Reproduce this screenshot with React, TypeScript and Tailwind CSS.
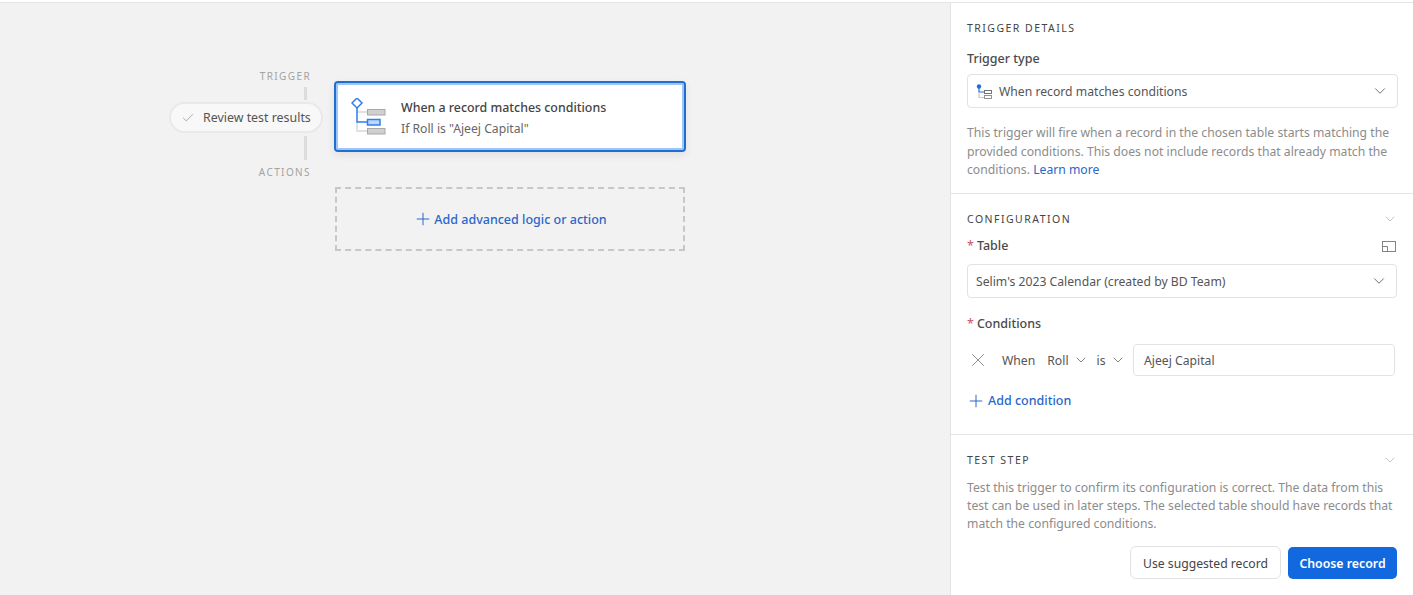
import { Check, ChevronDown, Plus, X } from 'lucide-react';

function TreeIcon() {
  return (
    <svg width="36" height="38" viewBox="0 0 36 38" fill="none">
      <path d="M6 14H16M6 24V33H16" stroke="#d8d8d8" strokeWidth="1.5" />
      <path d="M6 9V24H16" stroke="#2d7ff0" strokeWidth="1.5" />
      <path d="M6 0L11 5L6 10L1 5Z" fill="#fff" stroke="#2d7ff0" strokeWidth="1.5" />
      <rect x="16.5" y="11.5" width="17.5" height="5.5" fill="#d0d0d0" stroke="#a8a8a8" />
      <rect x="16.5" y="21.5" width="12.5" height="5.5" fill="#bcd7fa" stroke="#2d7ff0" strokeWidth="1.5" />
      <rect x="16.5" y="30.5" width="17.5" height="5.5" fill="#d0d0d0" stroke="#a8a8a8" />
    </svg>
  );
}

function SmallTreeIcon() {
  return (
    <svg width="16" height="17" viewBox="0 0 16 17" fill="none">
      <path d="M3 3V9H8" stroke="#1f6fe0" strokeWidth="1.2" />
      <path d="M3 9V14.5H8" stroke="#c8c8c8" strokeWidth="1.2" />
      <circle cx="3" cy="3.5" r="2.2" fill="#1f6fe0" />
      <rect x="8.5" y="7.5" width="7" height="3" stroke="#666" strokeWidth="0.9" />
      <rect x="8.5" y="12.5" width="7" height="3" stroke="#888" strokeWidth="0.9" />
    </svg>
  );
}

function SectionTitle({ children }: { children: string }) {
  return <h2 className="text-[10.5px] leading-[14px] tracking-[0.14em] text-[#444] uppercase">{children}</h2>;
}

function Label({ children }: { children: string }) {
  return (
    <div className="flex items-center gap-[3px] text-[12.5px] leading-[18px] font-medium text-[#4a4a4a]">
      <span className="font-normal text-[#c9506b]">*</span>
      {children}
    </div>
  );
}

export default function App() {
  return (
    <div className="h-[595px] w-[1413px] overflow-hidden bg-white pt-[2px]">
      <main
        className="flex h-[593px] border-t border-[#e4e4e4] text-[#444]"
        style={{ fontFamily: '"Noto Sans", "Open Sans", sans-serif' }}
      >
        {/* Canvas */}
        <div className="flex w-[950px] shrink-0 gap-[11px] bg-[#f2f2f2] pt-[66px] pl-[169px]">
          <div className="flex w-[154px] flex-col">
            <div className="pr-3 text-right text-[10px] leading-[14px] tracking-[0.14em] text-[#a3a3a3]">TRIGGER</div>
            <div className="mt-[4px] mr-4 h-[13px] w-[3px] self-end bg-[#dcdcdc]" />
            <div className="mt-[2px] flex h-[31px] items-center gap-[8px] rounded-full border-2 border-[#e9e9e9] bg-[#f8f8f8] pl-[10px] text-[12.4px] text-[#555]">
              <Check size={14} strokeWidth={1} className="text-[#777]" />
              <span className="pt-[2px]">Review test results</span>
            </div>
            <div className="mt-[3px] mr-4 h-[24px] w-[3px] self-end bg-[#dcdcdc]" />
            <div className="mt-[5px] pr-3 text-right text-[10px] leading-[14px] tracking-[0.14em] text-[#a3a3a3]">ACTIONS</div>
          </div>

          <div className="flex w-[352px] flex-col pt-[12px]">
            <div className="flex h-[71px] items-center gap-[14px] rounded-[4px] border-2 border-[#1f6fd0] bg-white pl-[15px] shadow-[inset_0_0_0_2px_#9cc6fa,0_3px_8px_rgba(0,0,0,0.08)]">
              <TreeIcon />
              <div className="pt-[3px]">
                <div className="text-[12.4px] leading-[21px] font-medium text-[#444]">When a record matches conditions</div>
                <div className="text-[12.2px] leading-[21px] text-[#666]">If Roll is "Ajeej Capital"</div>
              </div>
            </div>
            <div className="mx-px mt-[35px] flex h-[64px] items-center justify-center gap-px border-2 border-dashed border-[#c6c6cc] text-[12.5px] font-medium text-[#2b66c9]">
              <Plus size={20} strokeWidth={1.2} />
              <span className="pt-[2px]">Add advanced logic or action</span>
            </div>
          </div>
        </div>

        {/* Side panel */}
        <aside className="flex-1 border-l border-[#e4e4e4]">
          <section className="h-[191px] border-b border-[#e4e4e4] px-4 pt-[18px]">
            <SectionTitle>Trigger details</SectionTitle>
            <div className="mt-[15px] text-[12.5px] leading-[18px] font-medium text-[#4a4a4a]">Trigger type</div>
            <div className="mt-[6px] flex h-[34px] w-[431px] items-center rounded-[4px] border border-[#e2e2e2] pr-[8px] pl-2 text-[12.2px] text-[#555]">
              <SmallTreeIcon />
              <span className="ml-[7px] flex-1 pt-[2px]">When record matches conditions</span>
              <ChevronDown size={18} strokeWidth={1.1} className="text-[#555]" />
            </div>
            <p className="mt-[16px] w-[431px] text-[12.2px] leading-[18.5px] text-[#8c8c8c]">
              This trigger will fire when a record in the chosen table starts matching the provided conditions. This does
              not include records that already match the conditions. <span className="text-[#2b66c9]">Learn more</span>
            </p>
          </section>

          <section className="h-[241px] border-b border-[#e4e4e4] px-4 pt-[17px]">
            <div className="flex items-center justify-between">
              <SectionTitle>Configuration</SectionTitle>
              <ChevronDown size={16} strokeWidth={1} className="text-[#a8a8a8]" />
            </div>
            <div className="mt-[10px] flex items-center justify-between pr-[2px]">
              <Label>Table</Label>
              <svg width="14" height="11" viewBox="0 0 14 11" fill="none" stroke="#777" strokeWidth="0.9">
                <rect x="0.5" y="0.5" width="13" height="10" />
                <path d="M0.5 5.5H5.5V10.5" />
              </svg>
            </div>
            <div className="mt-[9px] flex h-[34px] w-[430px] items-center justify-between rounded-[4px] border border-[#e2e2e2] pr-[8px] pl-[8px] text-[12.2px] text-[#555]">
              <span className="pt-[2px]">Selim's 2023 Calendar (created by BD Team)</span>
              <ChevronDown size={18} strokeWidth={1.1} className="text-[#555]" />
            </div>
            <div className="mt-[17px]">
              <Label>Conditions</Label>
            </div>
            <div className="mt-[11px] flex w-[428px] items-center text-[12.2px] text-[#555]">
              <X size={22} strokeWidth={0.8} className="text-[#666]" />
              <span className="ml-[13px] pt-[2px]">When</span>
              <span className="ml-3 pt-[2px]">Roll</span>
              <ChevronDown size={16} strokeWidth={1.1} className="ml-1" />
              <span className="ml-2 pt-[2px]">is</span>
              <ChevronDown size={16} strokeWidth={1.1} className="ml-1" />
              <div className="ml-auto flex h-[32px] w-[262px] items-center rounded-[4px] border border-[#e2e2e2] pt-[2px] pl-[10px]">Ajeej Capital</div>
            </div>
            <div className="mt-[15px] -ml-px flex items-center gap-[2px] text-[12.5px] font-medium text-[#2b66c9]">
              <Plus size={20} strokeWidth={1.2} />
              Add condition
            </div>
          </section>

          <section className="px-4 pt-[17px]">
            <div className="flex items-center justify-between">
              <SectionTitle>Test step</SectionTitle>
              <ChevronDown size={16} strokeWidth={1} className="text-[#a8a8a8]" />
            </div>
            <p className="mt-[11px] w-[431px] text-[12.2px] leading-[18px] text-[#8c8c8c]">
              Test this trigger to confirm its configuration is correct. The data from this test can be used in later
              steps. The selected table should have records that match the configured conditions.
            </p>
            <div className="mt-[13px] flex w-[430px] items-center justify-end gap-[7px]">
              <button className="h-[33px] w-[151px] rounded-[6px] border border-[#e2e2e2] bg-white pt-[4px] text-[12.2px] text-[#444]">
                Use suggested record
              </button>
              <button className="h-[32px] w-[109px] rounded-[5px] bg-[#1268de] pt-[4px] text-[12.3px] font-semibold text-white">
                Choose record
              </button>
            </div>
          </section>
        </aside>
      </main>
    </div>
  );
}
